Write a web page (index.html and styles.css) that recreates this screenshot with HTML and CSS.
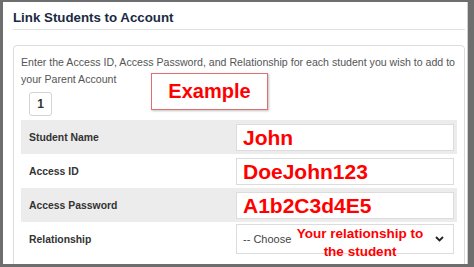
FILE: index.html
```html
<!DOCTYPE html>
<html lang="en">

<head>
    <meta charset="UTF-8">
    <meta name="viewport" content="width=device-width, initial-scale=1.0">
    <title>Link Students to Account</title>
    <link rel="stylesheet" href="styles.css">
</head>

<body>
    <div class="frame">
        <h1 class="title">Link Students to Account</h1>

        <div class="panel">
            <p class="intro">Enter the Access ID, Access Password, and Relationship for each student you wish to add to
                your Parent Account</p>
            <button class="tab">1</button>

            <div class="rows">
                <div class="row shaded">
                    <span class="label">Student Name</span>
                    <div class="field">John</div>
                </div>
                <div class="row">
                    <span class="label">Access ID</span>
                    <div class="field">DoeJohn123</div>
                </div>
                <div class="row shaded">
                    <span class="label">Access Password</span>
                    <div class="field">A1b2C3d4E5</div>
                </div>
                <div class="row">
                    <span class="label">Relationship</span>
                    <div class="select">
                        <span>-- Choose</span>
                        <svg width="9" height="6" viewBox="0 0 9 6"><path d="M1 1l3.5 3.5L8 1" fill="none" stroke="#222" stroke-width="1.8"/></svg>
                    </div>
                </div>
            </div>
        </div>

        <!-- annotations drawn over the form -->
        <div class="note-example">Example</div>
        <div class="note-relation">Your relationship to<br>the student</div>
    </div>
</body>

</html>
```

FILE: styles.css
```css
* {
    box-sizing: border-box;
}

body {
    margin: 0;
    height: 267px;
    overflow: hidden;
    background-color: #6e6e6e;
    font-family: "Liberation Sans", Arial, sans-serif;
}

.frame {
    position: relative;
    margin: 2px 6px 0 3px;
    height: 262px;
    background: #fff;
    border-right: 1px solid #cfcfcf;
    padding: 0 2px 0 10px;
    overflow: hidden;
}

.title {
    margin: 0;
    padding-top: 8px;
    height: 28px;
    font-size: 13.3px;
    font-weight: bold;
    color: #1b2a44;
    border-bottom: 1px solid #e2e2e2;
}

.panel {
    margin-top: 15px;
    border: 1px solid #dcdcdc;
    border-radius: 4px;
    padding: 8px 8px 0 7px;
    height: 240px;
}

.intro {
    margin: 0;
    font-size: 10.6px;
    line-height: 17px;
    color: #555;
}

.tab {
    display: block;
    margin: 4px 0 4px 8px;
    width: 23px;
    height: 24px;
    padding: 0;
    border: 1px solid #d4d4d4;
    border-radius: 3px;
    background: #fff;
    font-family: inherit;
    font-size: 12px;
    font-weight: bold;
    color: #333;
}

.rows {
    width: 436px;
}

.row {
    display: flex;
    align-items: center;
    height: 34px;
}

.row.shaded {
    background: #ececec;
}

.label {
    width: 215px;
    padding-left: 8px;
    font-size: 10.4px;
    font-weight: bold;
    color: #333;
}

.field {
    width: 218px;
    height: 27px;
    border: 1px solid #dcdcdc;
    background: #fff;
    padding-left: 6px;
    font-size: 21px;
    font-weight: bold;
    line-height: 25px;
    color: #f00;
}

.select {
    width: 218px;
    height: 30px;
    border: 1px solid #dcdcdc;
    background: #fff;
    display: flex;
    align-items: center;
    justify-content: space-between;
    padding: 0 9px 0 6px;
    font-size: 11px;
    color: #444;
}

.note-example {
    position: absolute;
    left: 148px;
    top: 71px;
    width: 117px;
    height: 37px;
    border: 1px solid #e07070;
    box-shadow: 1px 1px 2px rgba(0, 0, 0, 0.25);
    background: #fff;
    text-align: center;
    font-size: 20px;
    font-weight: bold;
    line-height: 34px;
    color: #f00;
}

.note-relation {
    position: absolute;
    left: 282px;
    top: 223px;
    width: 150px;
    text-align: center;
    font-size: 13.5px;
    font-weight: bold;
    line-height: 18px;
    color: #f00;
}
```
